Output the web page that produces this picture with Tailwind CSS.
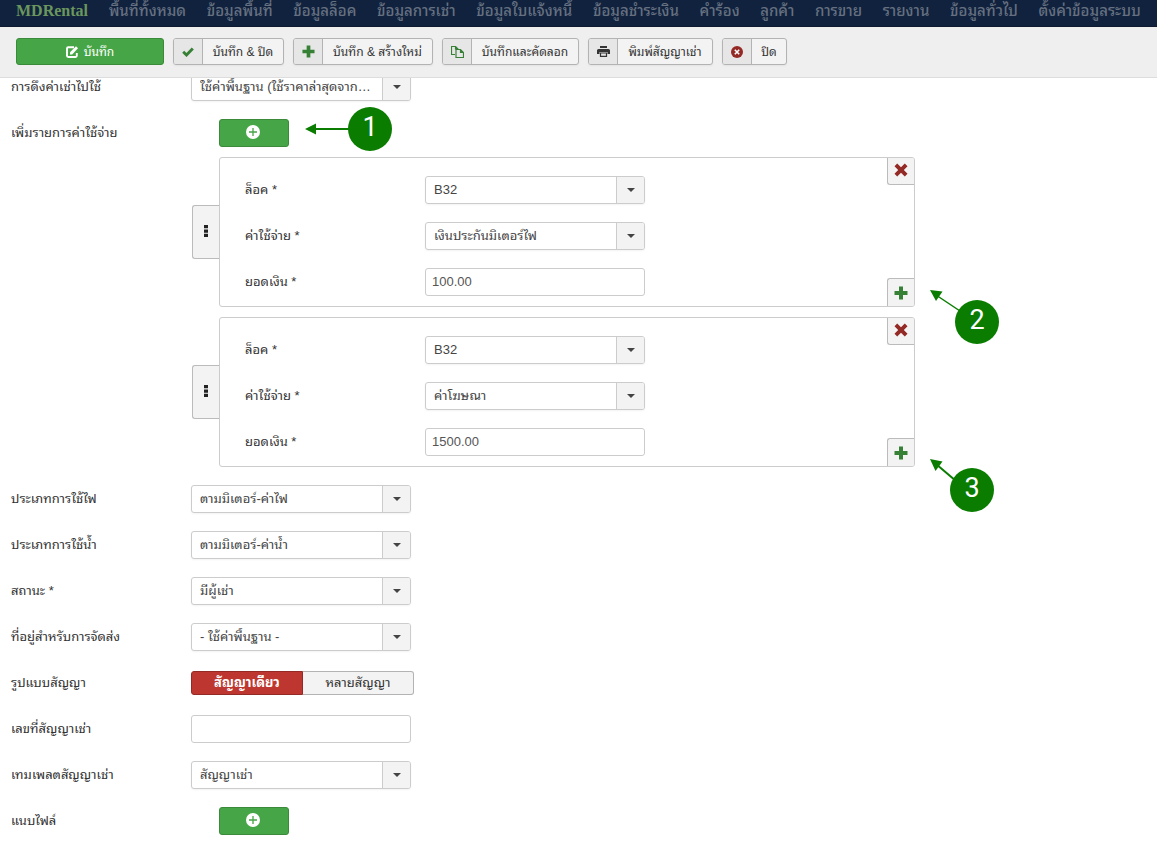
<!DOCTYPE html>
<html lang="th">
<head>
<meta charset="utf-8">
<meta name="viewport" content="width=device-width, initial-scale=1">
<title>MDRental</title>
<script src="https://cdn.jsdelivr.net/npm/@tailwindcss/browser@4"></script>
</head>
<body class="min-h-screen overflow-x-hidden bg-white font-['Liberation_Sans','Noto_Sans_Thai_Looped',Loma,Waree,Garuda,Tahoma,sans-serif] text-[13px] leading-[18px] text-[#333]">

<svg class="hidden" aria-hidden="true">
  <symbol id="plus" viewBox="0 0 14 14"><path d="M5 0.5h4v4.5h4.5v4H9v4.500H5V9H0.500V5H5z" fill="currentColor"/></symbol>
  <symbol id="cross" viewBox="0 0 14 14"><path d="M3.200 0.500 7 4.200 10.800 0.500 13.500 3.200 9.800 7 13.500 10.800 10.800 13.500 7 9.800 3.200 13.500 0.500 10.800 4.200 7 0.500 3.200z" fill="currentColor"/></symbol>
  <symbol id="circle-plus" viewBox="0 0 14 14"><circle cx="7" cy="7" r="7" fill="#fff"/><path d="M7 3v8M3 7h8" stroke="#46a546" stroke-width="1.300"/></symbol>
  <symbol id="caret" viewBox="0 0 8 4"><path d="M0 0h8L4 4z" fill="currentColor"/></symbol>
  <symbol id="dots" viewBox="0 0 4 12"><path d="M0 0h4v3.300H0zM0 4.400h4v3.300H0zM0 8.700h4V12H0z" fill="currentColor"/></symbol>
</svg>

<header class="relative z-20">
  <nav class="flex h-[27px] items-center justify-between border-b border-[#0d1a30] bg-[#10223e] px-4 pb-1 whitespace-nowrap text-[15px] font-medium text-[#667080]">
    <a href="#" class="font-['Liberation_Serif',serif] text-base font-bold text-[#6b965d]">MDRental</a>
    <a href="#">พื้นที่ทั้งหมด</a>
    <a href="#">ข้อมูลพื้นที่</a>
    <a href="#">ข้อมูลล็อค</a>
    <a href="#">ข้อมูลการเช่า</a>
    <a href="#">ข้อมูลใบแจ้งหนี้</a>
    <a href="#">ข้อมูลชำระเงิน</a>
    <a href="#">คำร้อง</a>
    <a href="#">ลูกค้า</a>
    <a href="#">การขาย</a>
    <a href="#">รายงาน</a>
    <a href="#">ข้อมูลทั่วไป</a>
    <a href="#">ตั้งค่าข้อมูลระบบ</a>
  </nav>
  <div class="flex gap-[9px] border-b border-[#ddd] bg-[#efefef] px-4 pt-[11px] pb-3 text-xs whitespace-nowrap">
    <button type="button" class="flex h-[27px] w-[148px] items-center justify-center gap-1.5 rounded-[3px] border border-[#3a8a3a] bg-[#46a546] text-white">
      <svg class="size-3" viewBox="0 0 12 12"><path d="M8 1.200H2.200a1.200 1.200 0 0 0-1.200 1.200v7.400A1.200 1.200 0 0 0 2.200 11h7.400a1.200 1.200 0 0 0 1.200-1.200V7" fill="none" stroke="#fff" stroke-width="1.900"/><path d="M4 8.500V6.200L10 0.200 12 2.200 6.200 8.500z" fill="#fff"/></svg>
      บันทึก
    </button>
    <button type="button" class="flex h-[27px] w-[111px] overflow-hidden rounded-[3px] border border-[#b3b3b3] bg-[#f3f3f3] shadow-xs">
      <span class="flex h-full w-[29px] shrink-0 items-center justify-center border-r border-[#b3b3b3] bg-[#e6e6e6]"><svg class="h-[10px] w-3 text-[#378137]" viewBox="0 0 12 10"><path d="M1.200 4.800 4.500 8 10.800 1.400" fill="none" stroke="currentColor" stroke-width="2.900"/></svg></span>
      <span class="flex h-full grow items-center justify-center">บันทึก &amp; ปิด</span>
    </button>
    <button type="button" class="flex h-[27px] w-[140px] overflow-hidden rounded-[3px] border border-[#b3b3b3] bg-[#f3f3f3] shadow-xs">
      <span class="flex h-full w-[29px] shrink-0 items-center justify-center border-r border-[#b3b3b3] bg-[#e6e6e6]"><svg class="size-[13px] text-[#378137]"><use href="#plus"/></svg></span>
      <span class="flex h-full grow items-center justify-center">บันทึก &amp; สร้างใหม่</span>
    </button>
    <button type="button" class="flex h-[27px] w-[137px] overflow-hidden rounded-[3px] border border-[#b3b3b3] bg-[#f3f3f3] shadow-xs">
      <span class="flex h-full w-[29px] shrink-0 items-center justify-center border-r border-[#b3b3b3] bg-[#e6e6e6]"><svg class="h-3 w-[13px] text-[#378137]" viewBox="0 0 13 12" fill="none" stroke="currentColor" stroke-width="1.200"><path d="M4 8.500H0.500V0.500H4.500L7 3V3.500M4.500 0.500V3H7M5 3.500H9.500L12.500 6.500V11.500H5zM9.500 3.500V6.500H12.500"/></svg></span>
      <span class="flex h-full grow items-center justify-center">บันทึกและคัดลอก</span>
    </button>
    <button type="button" class="flex h-[27px] w-[125px] overflow-hidden rounded-[3px] border border-[#b3b3b3] bg-[#f3f3f3] shadow-xs">
      <span class="flex h-full w-[29px] shrink-0 items-center justify-center border-r border-[#b3b3b3] bg-[#e6e6e6]"><svg class="h-[11px] w-[13px] text-[#333]" viewBox="0 0 13 11" fill="currentColor"><path d="M3 0h7v2H3zM1.500 3h10A1.500 1.500 0 0 1 13 4.500V8h-2.500V6h-8v2H0V4.500A1.500 1.500 0 0 1 1.500 3z"/><path d="M3.500 7h6v3.300h-6z" fill="#e6e6e6" stroke="currentColor" stroke-width="1.200"/></svg></span>
      <span class="flex h-full grow items-center justify-center">พิมพ์สัญญาเช่า</span>
    </button>
    <button type="button" class="flex h-[27px] w-[65px] overflow-hidden rounded-[3px] border border-[#b3b3b3] bg-[#f3f3f3] shadow-xs">
      <span class="flex h-full w-[29px] shrink-0 items-center justify-center border-r border-[#b3b3b3] bg-[#e6e6e6]"><svg class="size-3" viewBox="0 0 12 12"><circle cx="6" cy="6" r="6" fill="#942a25"/><path d="M3.800 3.800 8.200 8.200M8.200 3.800 3.800 8.200" stroke="#fff" stroke-width="1.600"/></svg></span>
      <span class="flex h-full grow items-center justify-center">ปิด</span>
    </button>
  </div>
</header>

<main class="-mt-[5px] flex flex-col gap-[18px] px-[11px] pb-4">
  <div class="flex h-7 items-center">
    <label for="rent" class="w-[180px] shrink-0">การดึงค่าเช่าไปใช้</label>
    <div class="grid w-[220px]">
      <select id="rent" class="col-start-1 row-start-1 h-7 w-full appearance-none rounded-[3px] border border-[#ccc] bg-white pr-[38px] pl-2 text-ellipsis text-[#444] shadow-xs"><option>ใช้ค่าพื้นฐาน (ใช้ราคาล่าสุดจากข้อมูลล็อค)</option></select>
      <span class="pointer-events-none z-10 col-start-1 row-start-1 m-px flex w-[28px] items-center justify-center justify-self-end rounded-r-[2px] border-l border-[#ccc] bg-[#f3f3f3]"><svg class="h-1 w-2 text-[#444]"><use href="#caret"/></svg></span>
    </div>
  </div>

  <div class="flex flex-col gap-[10px]">
    <div class="relative flex h-7 items-center">
      <span class="w-[208px] shrink-0">เพิ่มรายการค่าใช้จ่าย</span>
      <button type="button" aria-label="เพิ่มรายการ" class="flex h-7 w-[70px] items-center justify-center rounded-[3px] border border-[#3a8a3a] bg-[#46a546] pr-0.5 pb-[3px]"><svg class="size-[14px]"><use href="#circle-plus"/></svg></button>
      <svg class="absolute top-[-12px] left-[292px] h-11 w-[90px]" viewBox="0 0 90 44"><path d="M10 22H50" stroke="#0a7d00" stroke-width="2"/><path d="M2 22 13 16.500V27.500z" fill="#0a7d00"/><circle cx="67" cy="22" r="22" fill="#0a7d00"/><text x="67" y="29" text-anchor="middle" font-size="27" font-family="Roboto, sans-serif" fill="#fff">1</text></svg>
    </div>

    <div class="relative flex max-w-[904px] items-center pl-[181px]">
      <button type="button" aria-label="ย้าย" class="flex h-[54px] w-[27px] shrink-0 items-center justify-center rounded-l-[3px] border border-r-0 border-[#bbb] bg-[#f3f3f3] pb-0.5 text-[#222]"><svg class="h-3 w-1"><use href="#dots"/></svg></button>
      <section class="flex grow justify-between overflow-hidden rounded-[3px] border border-[#ccc]">
        <div class="flex flex-col gap-[18px] pt-[18px] pb-[10px] pl-[25px]">
          <div class="flex h-7 items-center">
            <label for="lock1" class="w-[180px] shrink-0">ล็อค *</label>
            <div class="grid w-[220px]">
              <select id="lock1" class="col-start-1 row-start-1 h-7 w-full appearance-none rounded-[3px] border border-[#ccc] bg-white pr-8 pl-2 text-[#444] shadow-xs"><option>B32</option></select>
              <span class="pointer-events-none z-10 col-start-1 row-start-1 m-px flex w-[28px] items-center justify-center justify-self-end rounded-r-[2px] border-l border-[#ccc] bg-[#f3f3f3]"><svg class="h-1 w-2 text-[#444]"><use href="#caret"/></svg></span>
            </div>
          </div>
          <div class="flex h-7 items-center">
            <label for="cost1" class="w-[180px] shrink-0">ค่าใช้จ่าย *</label>
            <div class="grid w-[220px]">
              <select id="cost1" class="col-start-1 row-start-1 h-7 w-full appearance-none rounded-[3px] border border-[#ccc] bg-white pr-8 pl-2 text-[#444] shadow-xs"><option>เงินประกันมิเตอร์ไฟ</option></select>
              <span class="pointer-events-none z-10 col-start-1 row-start-1 m-px flex w-[28px] items-center justify-center justify-self-end rounded-r-[2px] border-l border-[#ccc] bg-[#f3f3f3]"><svg class="h-1 w-2 text-[#444]"><use href="#caret"/></svg></span>
            </div>
          </div>
          <div class="flex h-7 items-center">
            <label for="amt1" class="w-[180px] shrink-0">ยอดเงิน *</label>
            <input id="amt1" value="100.00" class="h-7 w-[220px] rounded-[3px] border border-[#ccc] px-1.5 pb-0.5 text-[#555]">
          </div>
        </div>
        <div class="flex flex-col justify-between">
          <button type="button" aria-label="ลบ" class="flex h-[27px] w-[27px] items-center justify-center rounded-bl-[3px] border-b border-l border-[#bbb] bg-[#f3f3f3] pb-0.5 text-[#942a25]"><svg class="size-[14px]"><use href="#cross"/></svg></button>
          <button type="button" aria-label="เพิ่ม" class="flex h-[28px] w-[27px] items-center justify-center rounded-tl-[3px] border-t border-l border-[#bbb] bg-[#f3f3f3] text-[#378137]"><svg class="size-[14px]"><use href="#plus"/></svg></button>
        </div>
      </section>
      <svg class="absolute top-[130px] left-[917px] h-[60px] w-[72px]" viewBox="0 0 72 60"><path d="M8 8 32 24" stroke="#0a7d00" stroke-width="1.500"/><path d="M2 3 14.500 4.500 8 14z" fill="#0a7d00"/><circle cx="49" cy="35" r="22" fill="#0a7d00"/><text x="49" y="42" text-anchor="middle" font-size="27" font-family="Roboto, sans-serif" fill="#fff">2</text></svg>
    </div>

    <div class="relative flex max-w-[904px] items-center pl-[181px]">
      <button type="button" aria-label="ย้าย" class="flex h-[54px] w-[27px] shrink-0 items-center justify-center rounded-l-[3px] border border-r-0 border-[#bbb] bg-[#f3f3f3] pb-0.5 text-[#222]"><svg class="h-3 w-1"><use href="#dots"/></svg></button>
      <section class="flex grow justify-between overflow-hidden rounded-[3px] border border-[#ccc]">
        <div class="flex flex-col gap-[18px] pt-[18px] pb-[10px] pl-[25px]">
          <div class="flex h-7 items-center">
            <label for="lock2" class="w-[180px] shrink-0">ล็อค *</label>
            <div class="grid w-[220px]">
              <select id="lock2" class="col-start-1 row-start-1 h-7 w-full appearance-none rounded-[3px] border border-[#ccc] bg-white pr-8 pl-2 text-[#444] shadow-xs"><option>B32</option></select>
              <span class="pointer-events-none z-10 col-start-1 row-start-1 m-px flex w-[28px] items-center justify-center justify-self-end rounded-r-[2px] border-l border-[#ccc] bg-[#f3f3f3]"><svg class="h-1 w-2 text-[#444]"><use href="#caret"/></svg></span>
            </div>
          </div>
          <div class="flex h-7 items-center">
            <label for="cost2" class="w-[180px] shrink-0">ค่าใช้จ่าย *</label>
            <div class="grid w-[220px]">
              <select id="cost2" class="col-start-1 row-start-1 h-7 w-full appearance-none rounded-[3px] border border-[#ccc] bg-white pr-8 pl-2 text-[#444] shadow-xs"><option>ค่าโฆษณา</option></select>
              <span class="pointer-events-none z-10 col-start-1 row-start-1 m-px flex w-[28px] items-center justify-center justify-self-end rounded-r-[2px] border-l border-[#ccc] bg-[#f3f3f3]"><svg class="h-1 w-2 text-[#444]"><use href="#caret"/></svg></span>
            </div>
          </div>
          <div class="flex h-7 items-center">
            <label for="amt2" class="w-[180px] shrink-0">ยอดเงิน *</label>
            <input id="amt2" value="1500.00" class="h-7 w-[220px] rounded-[3px] border border-[#ccc] px-1.5 pb-0.5 text-[#555]">
          </div>
        </div>
        <div class="flex flex-col justify-between">
          <button type="button" aria-label="ลบ" class="flex h-[27px] w-[27px] items-center justify-center rounded-bl-[3px] border-b border-l border-[#bbb] bg-[#f3f3f3] pb-0.5 text-[#942a25]"><svg class="size-[14px]"><use href="#cross"/></svg></button>
          <button type="button" aria-label="เพิ่ม" class="flex h-[28px] w-[27px] items-center justify-center rounded-tl-[3px] border-t border-l border-[#bbb] bg-[#f3f3f3] text-[#378137]"><svg class="size-[14px]"><use href="#plus"/></svg></button>
        </div>
      </section>
      <svg class="absolute top-[139px] left-[917px] h-[60px] w-[72px]" viewBox="0 0 72 60"><path d="M8 8 28 25" stroke="#0a7d00" stroke-width="2"/><path d="M2 3 14.500 5.500 7.500 15z" fill="#0a7d00"/><circle cx="44" cy="34" r="22" fill="#0a7d00"/><text x="44" y="41" text-anchor="middle" font-size="27" font-family="Roboto, sans-serif" fill="#fff">3</text></svg>
    </div>
  </div>

  <div class="flex h-7 items-center">
    <label for="power" class="w-[180px] shrink-0">ประเภทการใช้ไฟ</label>
    <div class="grid w-[220px]">
      <select id="power" class="col-start-1 row-start-1 h-7 w-full appearance-none rounded-[3px] border border-[#ccc] bg-white pr-8 pl-2 text-[#444] shadow-xs"><option>ตามมิเตอร์-ค่าไฟ</option></select>
      <span class="pointer-events-none z-10 col-start-1 row-start-1 m-px flex w-[28px] items-center justify-center justify-self-end rounded-r-[2px] border-l border-[#ccc] bg-[#f3f3f3]"><svg class="h-1 w-2 text-[#444]"><use href="#caret"/></svg></span>
    </div>
  </div>
  <div class="flex h-7 items-center">
    <label for="water" class="w-[180px] shrink-0">ประเภทการใช้น้ำ</label>
    <div class="grid w-[220px]">
      <select id="water" class="col-start-1 row-start-1 h-7 w-full appearance-none rounded-[3px] border border-[#ccc] bg-white pr-8 pl-2 text-[#444] shadow-xs"><option>ตามมิเตอร์-ค่าน้ำ</option></select>
      <span class="pointer-events-none z-10 col-start-1 row-start-1 m-px flex w-[28px] items-center justify-center justify-self-end rounded-r-[2px] border-l border-[#ccc] bg-[#f3f3f3]"><svg class="h-1 w-2 text-[#444]"><use href="#caret"/></svg></span>
    </div>
  </div>
  <div class="flex h-7 items-center">
    <label for="status" class="w-[180px] shrink-0">สถานะ *</label>
    <div class="grid w-[220px]">
      <select id="status" class="col-start-1 row-start-1 h-7 w-full appearance-none rounded-[3px] border border-[#ccc] bg-white pr-8 pl-2 text-[#444] shadow-xs"><option>มีผู้เช่า</option></select>
      <span class="pointer-events-none z-10 col-start-1 row-start-1 m-px flex w-[28px] items-center justify-center justify-self-end rounded-r-[2px] border-l border-[#ccc] bg-[#f3f3f3]"><svg class="h-1 w-2 text-[#444]"><use href="#caret"/></svg></span>
    </div>
  </div>
  <div class="flex h-7 items-center">
    <label for="addr" class="w-[180px] shrink-0">ที่อยู่สำหรับการจัดส่ง</label>
    <div class="grid w-[220px]">
      <select id="addr" class="col-start-1 row-start-1 h-7 w-full appearance-none rounded-[3px] border border-[#ccc] bg-white pr-8 pl-2 text-[#444] shadow-xs"><option>- ใช้ค่าพื้นฐาน -</option></select>
      <span class="pointer-events-none z-10 col-start-1 row-start-1 m-px flex w-[28px] items-center justify-center justify-self-end rounded-r-[2px] border-l border-[#ccc] bg-[#f3f3f3]"><svg class="h-1 w-2 text-[#444]"><use href="#caret"/></svg></span>
    </div>
  </div>
  <div class="flex h-7 items-center">
    <span id="form-type" class="w-[180px] shrink-0">รูปแบบสัญญา</span>
    <div role="group" aria-labelledby="form-type" class="flex h-6">
      <button type="button" aria-pressed="true" class="w-28 rounded-l-[3px] border border-[#942a25] bg-[#bd362f] font-bold text-white">สัญญาเดียว</button>
      <button type="button" aria-pressed="false" class="w-[111px] rounded-r-[3px] border border-l-0 border-[#b3b3b3] bg-[#f3f3f3]">หลายสัญญา</button>
    </div>
  </div>
  <div class="flex h-7 items-center">
    <label for="number" class="w-[180px] shrink-0">เลขที่สัญญาเช่า</label>
    <input id="number" class="h-7 w-[220px] rounded-[3px] border border-[#ccc] px-1.5 pb-0.5 text-[#555]">
  </div>
  <div class="flex h-7 items-center">
    <label for="template" class="w-[180px] shrink-0">เทมเพลตสัญญาเช่า</label>
    <div class="grid w-[220px]">
      <select id="template" class="col-start-1 row-start-1 h-7 w-full appearance-none rounded-[3px] border border-[#ccc] bg-white pr-8 pl-2 text-[#444] shadow-xs"><option>สัญญาเช่า</option></select>
      <span class="pointer-events-none z-10 col-start-1 row-start-1 m-px flex w-[28px] items-center justify-center justify-self-end rounded-r-[2px] border-l border-[#ccc] bg-[#f3f3f3]"><svg class="h-1 w-2 text-[#444]"><use href="#caret"/></svg></span>
    </div>
  </div>
  <div class="flex h-7 items-center">
    <span class="w-[208px] shrink-0">แนบไฟล์</span>
    <button type="button" aria-label="แนบไฟล์" class="flex h-7 w-[70px] items-center justify-center rounded-[3px] border border-[#3a8a3a] bg-[#46a546] pr-0.5 pb-[3px]"><svg class="size-[14px]"><use href="#circle-plus"/></svg></button>
  </div>
</main>
</body>
</html>
